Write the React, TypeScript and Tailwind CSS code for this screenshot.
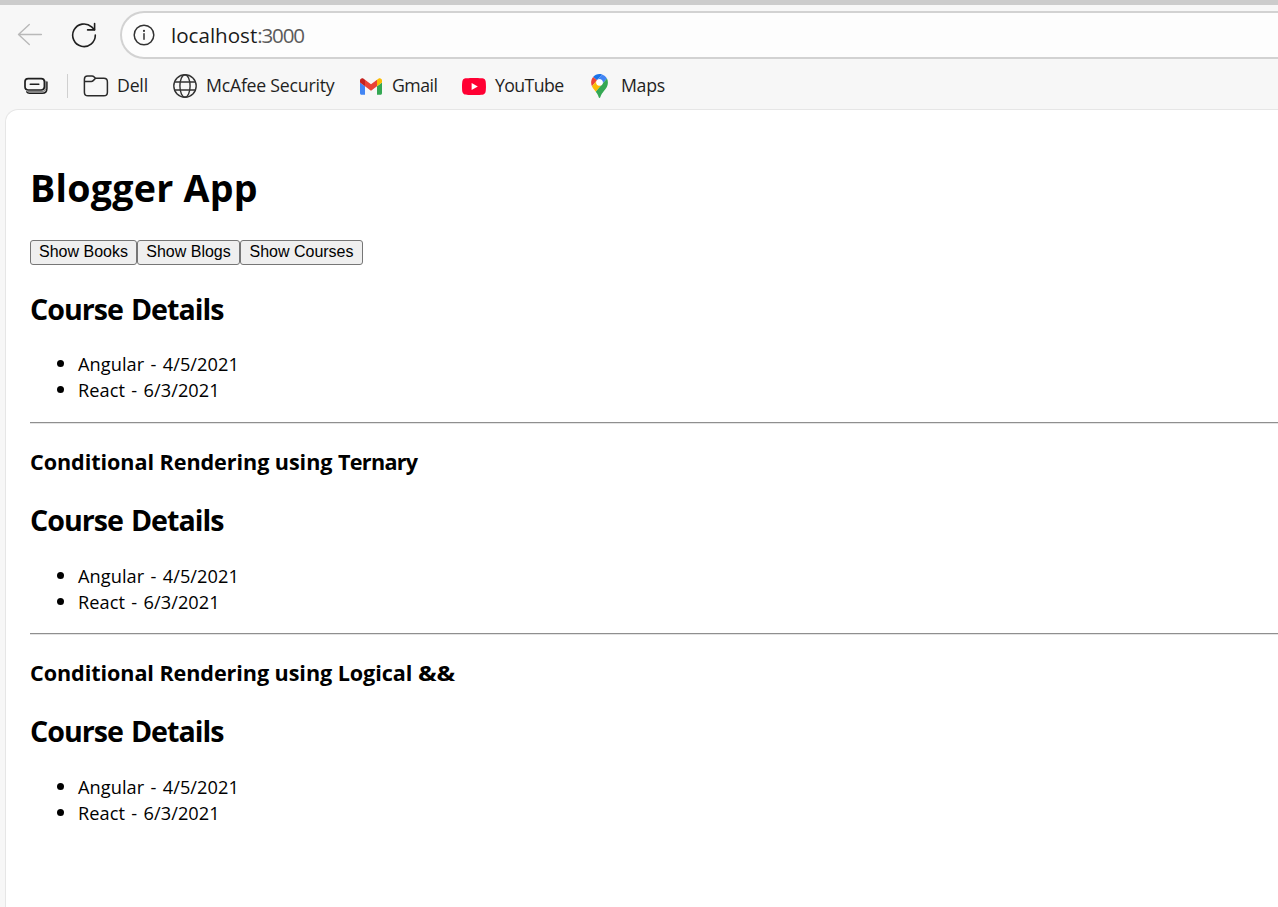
import type { ReactNode } from "react";

const courses = [
  { name: "Angular", date: "4/5/2021" },
  { name: "React", date: "6/3/2021" },
];

function BackIcon() {
  return (
    <svg width="26" height="24" viewBox="0 0 26 24" fill="none" stroke="#b9b9b9" strokeWidth="1.4" strokeLinecap="round" strokeLinejoin="round">
      <path d="M24.4 11.5H1.5M12.3 1.5 1.5 11.5 12.3 21.5" />
    </svg>
  );
}

function ReloadIcon() {
  return (
    <svg width="26" height="26" viewBox="0 0 26 26" fill="none" stroke="#1f1f1f" strokeWidth="1.6" strokeLinecap="round" strokeLinejoin="round">
      <path d="M24.3 13.1A11.3 11.3 0 1 1 20.6 4.9L23.4 7.6" />
      <path d="M23.6 1.5V7.9H16.6" />
    </svg>
  );
}

function InfoIcon() {
  return (
    <svg width="22" height="22" viewBox="0 0 22 22" fill="none" stroke="#333333" strokeWidth="1.5">
      <circle cx="11" cy="11" r="9.8" />
      <path d="M11 9.8V15.2" strokeLinecap="round" />
      <circle cx="11" cy="6.9" r="1.05" fill="#333333" stroke="none" />
    </svg>
  );
}

function TabActionsIcon() {
  return (
    <svg width="24" height="18" viewBox="0 0 24 18" fill="none" stroke="#1f1f1f" strokeLinecap="round">
      <rect x="1" y="1.6" width="19.4" height="11.4" rx="3.2" strokeWidth="1.7" />
      <path d="M6.3 7.3H14.8" strokeWidth="1.6" />
      <path d="M22.9 5V11.4Q22.9 16.2 18.2 16.2H5.5Q3.6 16.2 2.8 14.8" strokeWidth="1.5" />
      <path d="M21.7 4V11.4Q21.7 14.6 18.2 14.6H4.2" stroke="#555555" strokeWidth="0.8" />
    </svg>
  );
}

function FolderIcon() {
  return (
    <svg width="26" height="22" viewBox="0 0 26 22" fill="none" stroke="#2b2b2b" strokeWidth="1.5" strokeLinejoin="round">
      <path d="M1.4 4.2Q1.4 1 4.6 1H9Q10.3 1 11 1.9L12.5 3.3H20.8Q24.4 3.3 24.4 6.9V17.2Q24.4 20.8 20.8 20.8H5Q1.4 20.8 1.4 17.2Z" />
      <path d="M1.4 6.4H8.2Q9.4 6.4 10.2 5.6L12.6 3.3" />
    </svg>
  );
}

function GlobeIcon() {
  return (
    <svg width="24" height="24" viewBox="0 0 24 24" fill="none" stroke="#333333" strokeWidth="1.4">
      <circle cx="12" cy="12" r="11.2" />
      <ellipse cx="12" cy="12" rx="5.1" ry="11.2" />
      <path d="M1.6 8H22.4M1.6 16H22.4" />
    </svg>
  );
}

function GmailIcon() {
  return (
    <svg width="22" height="17" viewBox="52 42 88 66">
      <path fill="#4285f4" d="M58 108h14V74L52 59v43c0 3.32 2.69 6 6 6" />
      <path fill="#34a853" d="M120 108h14c3.32 0 6-2.69 6-6V59l-20 15" />
      <path fill="#fbbc04" d="M120 48v26l20-15v-8c0-7.42-8.47-11.65-14.4-7.2" />
      <path fill="#ea4335" d="M72 74V48l24 18 24-18v26L96 92" />
      <path fill="#c5221f" d="M52 51v8l20 15V48l-5.6-4.2c-5.94-4.45-14.4-.22-14.4 7.2" />
    </svg>
  );
}

function YouTubeIcon() {
  return (
    <svg width="24" height="17" viewBox="0 0 24 17">
      <path fill="#ff0033" d="M23.5 2.66A3 3 0 0 0 21.4.53C19.5 0 12 0 12 0S4.5 0 2.6.53A3 3 0 0 0 .5 2.66C0 4.5 0 8.5 0 8.5s0 4 .5 5.84a3 3 0 0 0 2.1 2.13C4.5 17 12 17 12 17s7.5 0 9.4-.53a3 3 0 0 0 2.1-2.13C24 12.5 24 8.5 24 8.5s0-4-.5-5.84Z" />
      <path fill="#ffffff" d="M9.6 12.1 15.8 8.5 9.6 4.9Z" />
    </svg>
  );
}

function MapsIcon() {
  return (
    <svg width="17" height="24" viewBox="0 0 92.3 132.3">
      <path fill="#1a73e8" d="M60.2 2.2C55.8.8 51 0 46.1 0 32 0 19.3 6.4 10.8 16.5l21.8 18.3L60.2 2.2z" />
      <path fill="#ea4335" d="M10.8 16.5C4.1 24.5 0 34.9 0 46.1c0 8.7 1.7 15.7 4.6 22l28-33.3-21.8-18.3z" />
      <path fill="#4285f4" d="M46.2 28.5c9.8 0 17.7 7.9 17.7 17.7 0 4.3-1.6 8.3-4.2 11.4 0 0 13.9-16.6 27.5-32.7-5.6-10.8-15.3-19-27-22.7L32.6 34.8c3.3-3.8 8.1-6.3 13.6-6.3" />
      <path fill="#fbbc04" d="M46.2 63.8c-9.8 0-17.7-7.9-17.7-17.7 0-4.3 1.5-8.3 4.1-11.3l-28 33.3c4.8 10.6 12.8 19.2 21 29.9l34.1-40.5c-3.3 3.9-8.1 6.3-13.5 6.3" />
      <path fill="#34a853" d="M59.1 109.2c15.4-24.1 33.3-35 33.3-63 0-7.7-1.9-14.9-5.2-21.3L25.6 98c2.6 3.4 5.3 7.3 7.9 11.3 9.4 14.5 6.8 23.1 12.8 23.1s3.4-8.7 12.8-23.2" />
      <circle cx="46.2" cy="46.2" r="17.7" fill="#ffffff" />
    </svg>
  );
}

function Bookmark({ icon, label, className }: { icon: ReactNode; label: string; className: string }) {
  return (
    <div className={`flex h-8 shrink-0 items-center ${className}`}>
      {icon}
      <span className="mb-[2px] whitespace-nowrap">{label}</span>
    </div>
  );
}

function PlainButton({ label, className }: { label: string; className: string }) {
  return (
    <button className={`h-[25px] rounded-[3px] border border-[#767676] bg-[#efefef] pb-0.5 text-center font-['Liberation_Sans',sans-serif] text-[16px] leading-[21px] whitespace-nowrap ${className}`}>
      {label}
    </button>
  );
}

function CourseDetails({ listGap }: { listGap: string }) {
  return (
    <section>
      <h2 className="h-[38px] text-[28.6px] leading-[38px] font-bold tracking-[-0.98px] [word-spacing:1.5px]">Course Details</h2>
      <ul className={listGap}>
        {courses.map((course) => (
          <li key={course.name} className="flex h-[26px] items-center pl-[27px] text-[18.2px] leading-[26px]">
            <span className="mr-[14px] mb-[2px] size-[7px] rounded-full bg-black" />
            <span className="tracking-[0.06px] [word-spacing:1.5px]">{course.name} - {course.date}</span>
          </li>
        ))}
      </ul>
    </section>
  );
}

function Rule() {
  return <hr className="h-[2px] border-0 border-t border-[#8f8f8f] bg-[#e4e4e4]" />;
}

export default function App() {
  return (
    <div className="flex h-[907px] w-full flex-col overflow-hidden bg-[#f7f7f7] font-['Open_Sans','Noto_Sans',sans-serif] text-black">
      <div className="h-[5px] shrink-0 bg-[#cccccc]" />
      <header className="shrink-0">
        <div className="flex h-[60px] items-center pl-[17px]">
          <BackIcon />
          <div className="ml-[28px]"><ReloadIcon /></div>
          <div className="ml-[23px] flex h-12 flex-1 items-center rounded-l-full border-2 border-r-0 border-[#d2d2d2] bg-[#fdfdfd] pl-[11px]">
            <InfoIcon />
            <div className="ml-4 text-[20.6px] leading-7 text-[#5b5b5b]">
              <span className="text-[#1b1b1b]">localhost</span><span className="tracking-[-1.2px]">:3000</span>
            </div>
          </div>
        </div>
        <nav className="flex h-[44px] items-center pb-[2px] pl-[24px] text-[17.7px] text-[#1f1f1f]">
          <TabActionsIcon />
          <div className="ml-[19px] h-6 w-px bg-[#d0d0d0]" />
          <Bookmark className="ml-[15px] w-[90px] gap-2 tracking-[-0.2px]" icon={<FolderIcon />} label="Dell" />
          <Bookmark className="w-[187px] gap-[9px] tracking-[-0.23px]" icon={<GlobeIcon />} label="McAfee Security" />
          <Bookmark className="w-[102px] gap-[10px] tracking-[-0.5px]" icon={<GmailIcon />} label="Gmail" />
          <Bookmark className="w-[129px] gap-[9px] tracking-[-0.6px]" icon={<YouTubeIcon />} label="YouTube" />
          <Bookmark className="gap-[13px] tracking-[-0.3px]" icon={<MapsIcon />} label="Maps" />
        </nav>
      </header>
      <main className="ml-[5px] flex-1 rounded-tl-[13px] border-t border-l border-[#e6e6e6] bg-white pt-[52px] pl-6">
        <h1 className="h-[50px] pt-px text-[37.6px] leading-[50px] font-bold tracking-[0.25px]">Blogger App</h1>
        <div className="mt-7 flex">
          <PlainButton className="w-[107px]" label="Show Books" />
          <PlainButton className="w-[103px]" label="Show Blogs" />
          <PlainButton className="w-[123px]" label="Show Courses" />
        </div>
        <div className="mt-[25px] mb-[19px]"><CourseDetails listGap="mt-[23px]" /></div>
        <Rule />
        <h3 className="mt-[23px] mb-6 h-[30px] text-[21.6px] leading-[30px] font-bold tracking-[-0.07px]">
          Conditional Rendering using <span className="tracking-[-0.7px]">Ternary</span>
        </h3>
        <div className="mb-[18px]"><CourseDetails listGap="mt-6" /></div>
        <Rule />
        <h3 className="mt-[23px] mb-6 h-[30px] text-[21.6px] leading-[30px] font-bold tracking-[-0.08px]">
          Conditional Rendering using Logical <span className="inline-block origin-left scale-x-[1.15]">&amp;&amp;</span>
        </h3>
        <CourseDetails listGap="mt-6" />
      </main>
    </div>
  );
}
